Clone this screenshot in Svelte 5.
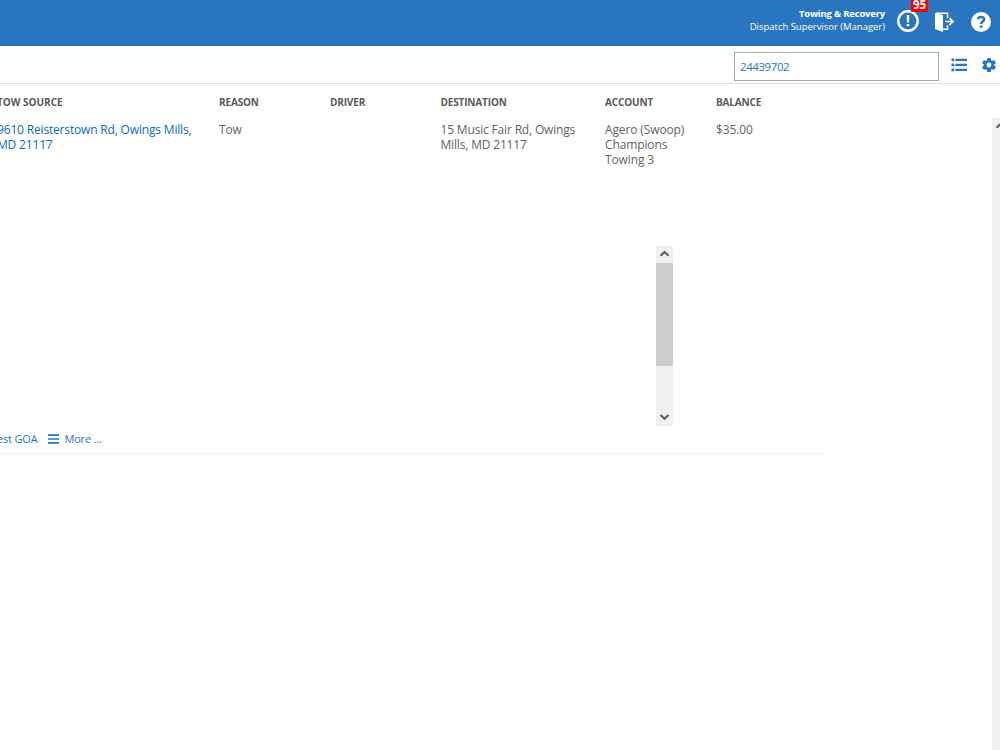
<script>
	let search = '24439702';
	const alerts = 95;

	const columns = ['Tow Source', 'Reason', 'Driver', 'Destination', 'Account', 'Balance'];

	const calls = [
		{
			source: ['9610 Reisterstown Rd, Owings Mills,', 'MD 21117'],
			reason: 'Tow',
			driver: '',
			destination: ['15 Music Fair Rd, Owings', 'Mills, MD 21117'],
			account: ['Agero (Swoop)', 'Champions', 'Towing 3'],
			balance: '$35.00'
		}
	];
</script>

<style>
	:global(body) {
		margin: 0;
		overflow: hidden;
		background: #fff;
	}

	.page {
		width: 1000px;
		height: 750px;
		overflow: hidden;
		display: flex;
		flex-direction: column;
		font-family: 'Open Sans', sans-serif;
		color: #636363;
	}

	svg {
		display: block;
	}

	/* Top bar */
	.topbar {
		flex: none;
		box-sizing: border-box;
		height: 46px;
		padding: 0 9px 3px 0;
		background: #2a75c0;
		color: #fff;
		display: flex;
		justify-content: flex-end;
		align-items: center;
	}

	.user {
		text-align: right;
		font-size: 9.5px;
		line-height: 13px;
		margin: -3px 12px 0 0;
		white-space: nowrap;
		letter-spacing: -0.02px;
	}

	.user b,
	.user span {
		display: block;
	}

	.user b {
		letter-spacing: -0.2px;
	}

	.alerts {
		position: relative;
		margin: -1px 16px 0 0;
	}

	.badge {
		position: absolute;
		left: 14px;
		top: -11px;
		width: 17px;
		height: 13px;
		background: #f00;
		font-size: 11.5px;
		line-height: 11px;
		font-weight: bold;
		text-align: center;
	}

	.signout {
		margin-right: 17px;
	}

	/* Search bar */
	.toolbar {
		flex: none;
		box-sizing: border-box;
		height: 38px;
		border-bottom: 1px solid #ddd;
		padding-right: 4px;
		display: flex;
		justify-content: flex-end;
		align-items: center;
	}

	.toolbar input {
		box-sizing: border-box;
		width: 205px;
		height: 29px;
		margin: 4px 12px 0 0;
		padding: 0 5px;
		border: 1px solid #a9a9a9;
		font-family: 'Open Sans', sans-serif;
		font-size: 11.5px;
		letter-spacing: -0.42px;
		color: #2a75c0;
		outline: none;
	}

	.toolbar .list {
		margin-right: 15px;
	}

	/* Call list */
	.row {
		display: grid;
		grid-template-columns: 222px 111px 110.5px 164.5px 111px 100px;
		margin-left: -3px;
	}

	.head {
		height: 34px;
		padding-top: 11px;
		box-sizing: border-box;
		font-size: 10px;
		line-height: 15px;
		font-weight: bold;
		letter-spacing: -0.15px;
		text-transform: uppercase;
		color: #5a5a5a;
	}

	.head div:first-child {
		letter-spacing: 0;
	}

	.body {
		display: flex;
		flex: 1;
		justify-content: space-between;
	}

	.call {
		width: 827px;
		height: 336px;
		box-sizing: border-box;
		border-bottom: 1px solid #f5f5f5;
		display: flex;
		flex-direction: column;
	}

	.call .row {
		flex: none;
		height: 128px;
		box-sizing: border-box;
		padding-top: 4px;
		font-size: 12px;
		line-height: 15px;
		letter-spacing: -0.12px;
		white-space: nowrap;
	}

	.row .source,
	.row .destination {
		letter-spacing: -0.17px;
	}

	.row .source {
		color: #0b69c0;
	}

	.details {
		height: 180px;
		display: flex;
		justify-content: flex-end;
		padding-right: 154px;
	}

	.scroll {
		width: 17px;
		background: #f0f0f0;
		display: flex;
		flex-direction: column;
	}

	.scroll .thumb {
		height: 103px;
		margin-bottom: auto;
		background: #cdcdcd;
	}

	.actions {
		display: flex;
		align-items: center;
		height: 25px;
		margin-left: -3px;
		font-size: 11px;
		letter-spacing: -0.18px;
		color: #2a75c0;
		white-space: nowrap;
	}

	.actions svg {
		margin: 0 5px 0 11px;
	}

	.page-scroll {
		width: 8px;
		overflow: hidden;
		background: #f0f0f0;
	}
</style>

{#snippet arrow(down)}
	<svg width="17" height="17" viewBox="0 0 17 17">
		<path
			d={down ? 'M4.5 6 8.5 9.8 12.5 6' : 'M4.5 9.8 8.5 6 12.5 9.8'}
			fill="none"
			stroke="#606060"
			stroke-width="2.2" />
	</svg>
{/snippet}

<div class="page">
	<!-- Top bar -->
	<header class="topbar">
		<div class="user">
			<b>Towing &amp; Recovery</b>
			<span>Dispatch Supervisor (Manager)</span>
		</div>
		<div class="alerts">
			<svg width="22" height="22" viewBox="0 0 22 22">
				<circle cx="11" cy="11" r="9.7" fill="none" stroke="#fff" stroke-width="2.4" />
				<path d="M9.7 5h2.6l-.3 7.5h-2zM9.8 14h2.4v2.3H9.8z" fill="#fff" />
			</svg>
			<span class="badge">{alerts}</span>
		</div>
		<svg class="signout" width="19" height="20" viewBox="0 0 19 20">
			<path d="M0 1 8 3v17L0 17z" fill="#fff" />
			<path d="M1 1.2h11.5V6M12.5 13v4.2H8" fill="none" stroke="#fff" stroke-width="1.5" />
			<path d="M10 9.5h7M14.5 6.2 18 9.5l-3.5 3.3" fill="none" stroke="#fff" stroke-width="1.7" />
		</svg>
		<svg width="20" height="20" viewBox="0 0 20 20">
			<circle cx="10" cy="10" r="10" fill="#fff" />
			<path
				d="M6.8 7.3C7.2 5.6 8.5 4.9 10 4.9c1.9 0 3.1 1 3.1 2.5 0 2.2-2.9 2.2-2.9 4.5"
				fill="none"
				stroke="#2a75c0"
				stroke-width="2.5" />
			<path d="M8.9 13.4h2.6v2.5H8.9z" fill="#2a75c0" />
		</svg>
	</header>

	<!-- Search bar -->
	<div class="toolbar">
		<input type="text" bind:value={search} />
		<svg class="list" width="16" height="14" viewBox="0 0 16 14">
			<path
				d="M.5.5h2.7v2.7H.5zM4.3.8H16V3H4.3zM.5 5.5h2.7v2.7H.5zM4.3 5.8H16V8H4.3zM.5 10.5h2.7v2.7H.5zM4.3 10.8H16V13H4.3z"
				fill="#2a75c0" />
		</svg>
		<svg width="14" height="14" viewBox="0 0 14 14">
			<g fill="#2a75c0">
				{#each [0, 60, 120] as angle}
					<rect x="5" y="0" width="4" height="14" rx=".8" transform="rotate({angle} 7 7)" />
				{/each}
				<circle cx="7" cy="7" r="5.3" />
			</g>
			<circle cx="7" cy="7" r="2.4" fill="#fff" />
		</svg>
	</div>

	<!-- Call list -->
	<div class="row head">
		{#each columns as column}
			<div>{column}</div>
		{/each}
	</div>

	<div class="body">
		{#each calls as call}
			<div class="call">
				<div class="row">
					<div class="source">
						{#each call.source as line}<div>{line}</div>{/each}
					</div>
					<div>{call.reason}</div>
					<div>{call.driver}</div>
					<div class="destination">
						{#each call.destination as line}<div>{line}</div>{/each}
					</div>
					<div>
						{#each call.account as line}<div>{line}</div>{/each}
					</div>
					<div>{call.balance}</div>
				</div>

				<div class="details">
					<div class="scroll">
						{@render arrow(false)}
						<div class="thumb"></div>
						{@render arrow(true)}
					</div>
				</div>

				<div class="actions">
					<span>est GOA</span>
					<svg width="11" height="10" viewBox="0 0 11 10">
						<path d="M0 .3h11v1.6H0zM0 4.2h11v1.6H0zM0 8.1h11v1.6H0z" fill="#2a75c0" />
					</svg>
					<span>More ...</span>
				</div>
			</div>
		{/each}
		<div class="page-scroll">
			{@render arrow(false)}
		</div>
	</div>
	<!-- xCall list -->
</div>
